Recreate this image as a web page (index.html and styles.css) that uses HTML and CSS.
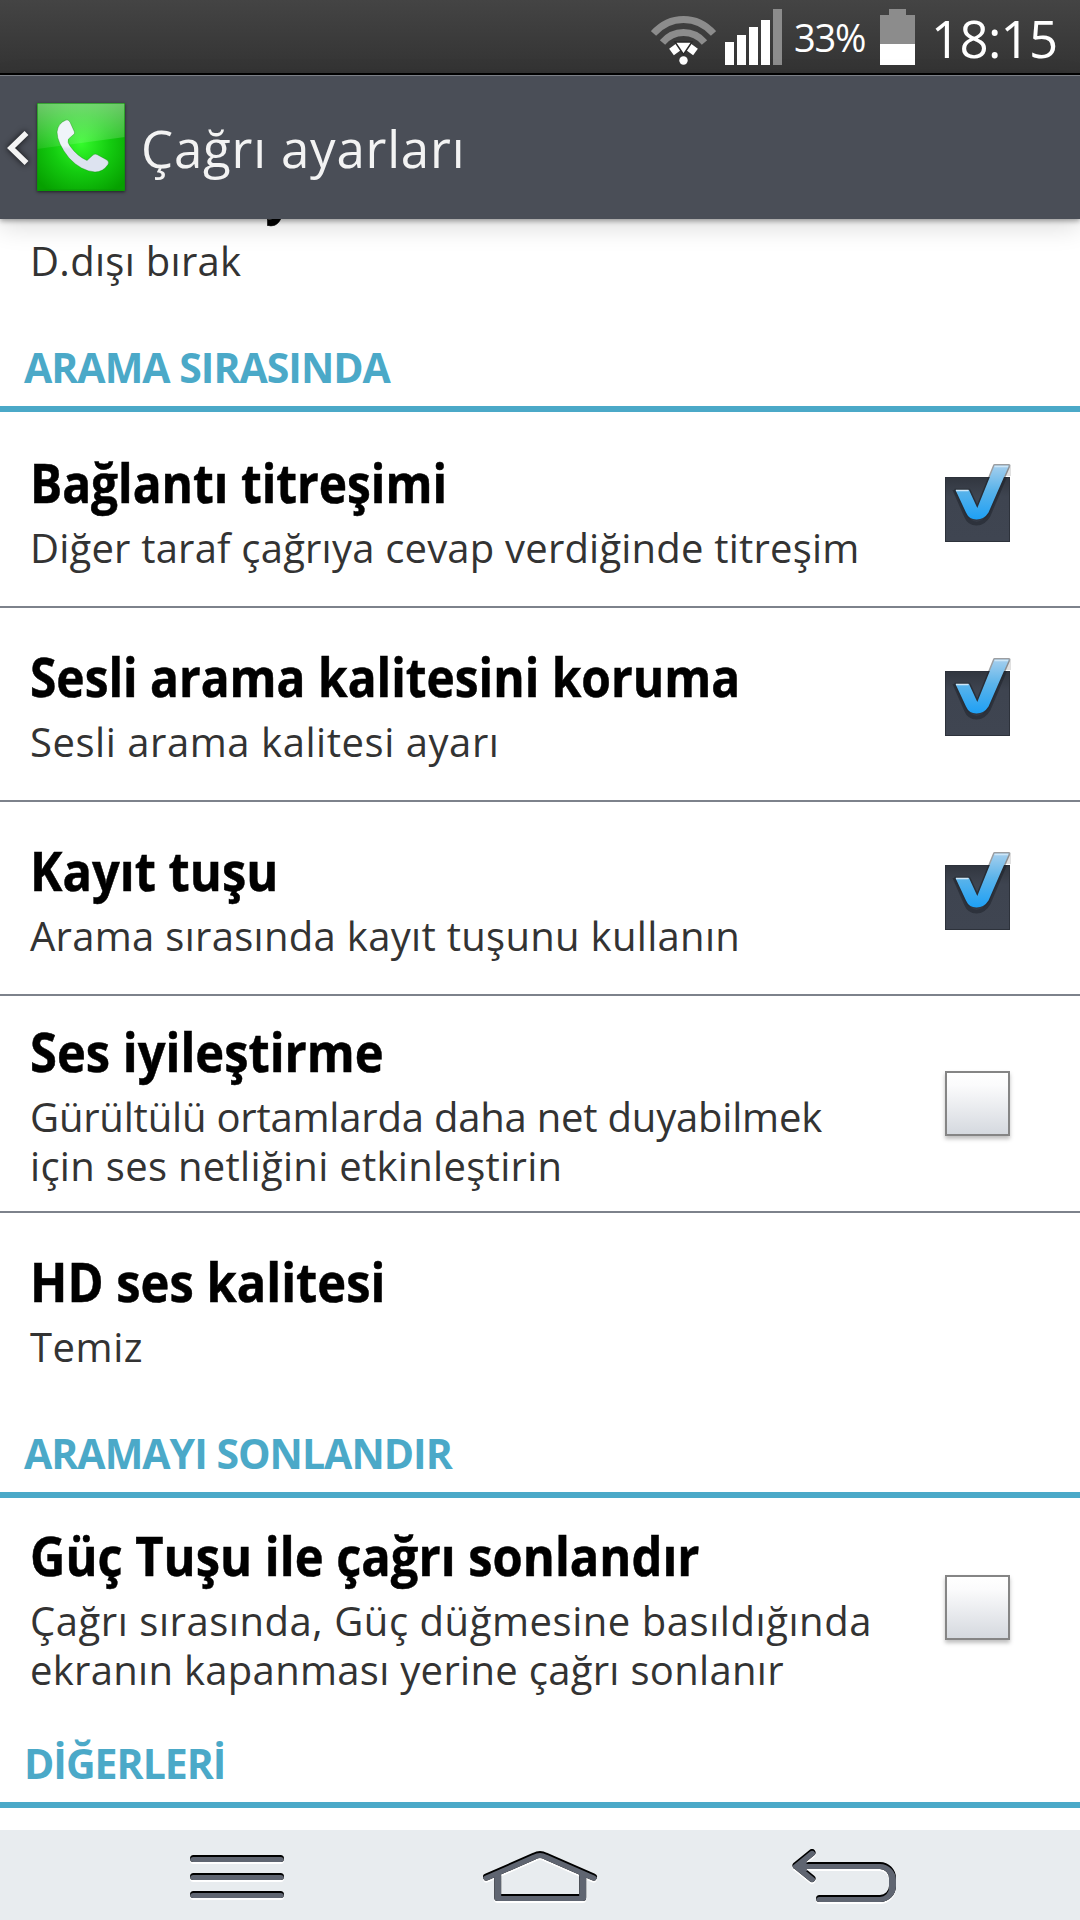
FILE: index.html
```html
<!DOCTYPE html>
<html lang="tr">
<head>
    <meta charset="UTF-8">
    <meta name="viewport" content="width=device-width, initial-scale=1.0">
    <title>Çağrı ayarları</title>
    <link rel="stylesheet" href="styles.css">
</head>
<body>
    <!-- Shared gradients and shapes -->
    <svg class="defs" width="0" height="0">
        <defs>
            <linearGradient id="tick-fill" x1="0" y1="0" x2="0" y2="1">
                <stop offset="0" stop-color="#a5cfee"/>
                <stop offset="0.45" stop-color="#5cb4ea"/>
                <stop offset="1" stop-color="#1ea0f5"/>
            </linearGradient>
            <linearGradient id="box-fill" x1="0" y1="0" x2="0" y2="1">
                <stop offset="0" stop-color="#31363f"/>
                <stop offset="0.3" stop-color="#3e4450"/>
                <stop offset="1" stop-color="#3f4551"/>
            </linearGradient>
            <clipPath id="box-clip"><rect x="0" y="13" width="65" height="65"/></clipPath>
            <symbol id="tick" viewBox="0 0 69 78">
                <rect x="0" y="13" width="65" height="65" fill="url(#box-fill)"/>
                <rect x="0.5" y="13.5" width="64" height="64" fill="none" stroke="#2d323b"/>
                <path d="M61 5l5-3v10h-8z" fill="#000" opacity="0.12"/>
                <path d="M10.5 28H24l8.3 18L49.5 3.5H64L43.5 51.5Q39 59.5 31.5 59.5T21 52z" fill="none" stroke="#1c2028" stroke-width="4" opacity="0.5" clip-path="url(#box-clip)"/>
                <path d="M10.5 26H24l8.3 18L49.5 1.5H64L43.5 48.5Q39 55.5 31.5 55.5T21 48.5z" fill="url(#tick-fill)" stroke="#23272f" stroke-opacity="0.45" stroke-width="3" stroke-linejoin="round" paint-order="stroke"/>
                <path d="M11 26.5h12.5M49.5 2.5h13.5" stroke="#cde6f7" stroke-width="1.5"/>
            </symbol>

            <path id="menu-shape" d="M3.5 3.5h87M3.5 21.5h87M3.5 39.5h87"/>
            <path id="home-shape" d="M14.7 26v21.5h85V26M3.5 27L51.5 6Q57 3 62.5 6L110.5 27"/>
            <path id="back-shape" d="M20 3.5L4 16.5L20 29.5M4 16.5H88A12.5 12.5 0 0 1 100.5 29V37A12.5 12.5 0 0 1 88 49.5H27.5"/>
            <mask id="menu-mask" maskUnits="userSpaceOnUse" x="0" y="0" width="120" height="60">
                <use href="#menu-shape" class="key-line" stroke="#fff"/>
            </mask>
            <mask id="home-mask" maskUnits="userSpaceOnUse" x="0" y="0" width="120" height="60">
                <use href="#home-shape" class="key-line" stroke="#fff"/>
            </mask>
            <mask id="back-mask" maskUnits="userSpaceOnUse" x="0" y="0" width="120" height="60">
                <use href="#back-shape" class="key-line" stroke="#fff"/>
            </mask>
        </defs>
    </svg>

    <div class="screen">
        <div class="status-bar">
            <svg class="wifi" width="65" height="50" viewBox="0 0 65 50">
                <path d="M2.5 17.5Q15 3.5 32.5 3.5T62.5 17.5" fill="none" stroke="#8c8c8c" stroke-width="7"/>
                <path d="M11.5 26.5Q20 16.5 32.5 16.5T53.5 26.5" fill="none" stroke="#8c8c8c" stroke-width="7"/>
                <path d="M20.5 36L28 30.5M37 30.5L44.5 36" stroke="#fff" stroke-width="8"/>
                <path d="M24 26h17l-8.5 12.5z" fill="#fff" stroke="#2a2a2a" stroke-width="1.5"/>
                <circle cx="32.5" cy="44.5" r="4.2" fill="#fff"/>
            </svg>
            <svg class="signal" width="57" height="56" viewBox="0 0 57 56">
                <path d="M0 33h9v23H0zM12 26h9v30h-9zM24 18h9v38h-9zM36 11h9v45h-9z" fill="#fff"/>
                <path d="M48 0h9v56h-9z" fill="#8c8c8c"/>
            </svg>
            <span class="percent">33%</span>
            <svg class="battery" width="35" height="56" viewBox="0 0 35 56">
                <path d="M9 0h17v6h9v29H0V6h9z" fill="#8c8c8c"/>
                <path d="M0 35h35v21H0z" fill="#fff"/>
            </svg>
            <span class="clock">18:15</span>
        </div>

        <header class="action-bar">
            <svg class="back" width="37" height="50" viewBox="0 0 37 50">
                <path d="M26.5 10L11 25l15.5 15" fill="none" stroke="#f4f4f4" stroke-width="5.5"/>
            </svg>
            <svg class="app-icon" width="88" height="88" viewBox="0 0 88 88">
                <defs>
                    <radialGradient id="glow" cx="0.5" cy="0.46" r="0.65">
                        <stop offset="0" stop-color="#35fb2c"/>
                        <stop offset="0.5" stop-color="#14cc10"/>
                        <stop offset="1" stop-color="#06a000"/>
                    </radialGradient>
                    <linearGradient id="gloss" x1="0" y1="0" x2="0" y2="1">
                        <stop offset="0" stop-color="#fff" stop-opacity="0.42"/>
                        <stop offset="1" stop-color="#fff" stop-opacity="0.08"/>
                    </linearGradient>
                    <linearGradient id="phone" x1="0" y1="0" x2="0" y2="1">
                        <stop offset="0.5" stop-color="#eff4f9"/>
                        <stop offset="0.56" stop-color="#dde3f0"/>
                    </linearGradient>
                </defs>
                <rect width="88" height="88" fill="url(#glow)"/>
                <path d="M0 0h88v34L0 46z" fill="url(#gloss)"/>
                <path d="M0.5 0v88M0 0.5h88M87.5 0v88M0 87h88" stroke="#12890f" stroke-opacity="0.6"/>
                <path d="M29 17Q31 16 33 19L37.5 29Q38 31 36 32L31.5 36Q30 39 33 43Q40 53 50 57.5L56 52Q58 50.5 60 51.5L70 57Q72.5 59 71 61.5Q66 69 58 69Q44 68 32 55Q20 40 20 29Q21 20 29 17z" fill="url(#phone)" stroke="#077a04" stroke-opacity="0.35"/>
            </svg>
            <h1>Çağrı ayarları</h1>
        </header>

        <main class="settings">
            <div class="item item-cut">
                <div class="item-text">
                    <h3>Otomatik yanıtlama</h3>
                    <p>D.dışı bırak</p>
                </div>
            </div>

            <h2>ARAMA SIRASINDA</h2>
            <div class="item item-first">
                <div class="item-text">
                    <h3 class="narrow">Bağlantı titreşimi</h3>
                    <p>Diğer taraf çağrıya cevap verdiğinde titreşim</p>
                </div>
                <svg class="checked" width="69" height="78"><use href="#tick"/></svg>
            </div>
            <div class="item">
                <div class="item-text">
                    <h3 class="narrow">Sesli arama kalitesini koruma</h3>
                    <p class="loose">Sesli arama kalitesi ayarı</p>
                </div>
                <svg class="checked" width="69" height="78"><use href="#tick"/></svg>
            </div>
            <div class="item">
                <div class="item-text">
                    <h3>Kayıt tuşu</h3>
                    <p>Arama sırasında kayıt tuşunu kullanın</p>
                </div>
                <svg class="checked" width="69" height="78"><use href="#tick"/></svg>
            </div>
            <div class="item item-tall">
                <div class="item-text">
                    <h3>Ses iyileştirme</h3>
                    <p><span class="tight">Gürültülü ortamlarda daha net duyabilmek</span><br>için ses netliğini etkinleştirin</p>
                </div>
                <span class="unchecked"></span>
            </div>
            <div class="item item-last">
                <div class="item-text">
                    <h3>HD ses kalitesi</h3>
                    <p class="loose">Temiz</p>
                </div>
            </div>

            <h2>ARAMAYI SONLANDIR</h2>
            <div class="item item-tall item-last">
                <div class="item-text">
                    <h3>Güç Tuşu ile çağrı sonlandır</h3>
                    <p><span class="loose">Çağrı sırasında, Güç düğmesine basıldığında</span><br>ekranın kapanması yerine çağrı sonlanır</p>
                </div>
                <span class="unchecked"></span>
            </div>

            <h2>DİĞERLERİ</h2>
        </main>

        <nav class="nav-bar">
            <svg class="key-menu" width="94" height="46">
                <use href="#menu-shape" class="key-line" stroke="#fff" y="2"/>
                <use href="#menu-shape" class="key-line" stroke="#000"/>
                <g mask="url(#menu-mask)">
                    <use href="#menu-shape" class="key-line" stroke="#5f6571" y="2"/>
                </g>
            </svg>
            <svg class="key-home" width="116" height="54">
                <use href="#home-shape" class="key-line" stroke="#fff" y="2"/>
                <use href="#home-shape" class="key-line" stroke="#000"/>
                <g mask="url(#home-mask)">
                    <use href="#home-shape" class="key-line" stroke="#5f6571" y="2"/>
                </g>
            </svg>
            <svg class="key-back" width="106" height="56">
                <use href="#back-shape" class="key-line" stroke="#fff" y="2"/>
                <use href="#back-shape" class="key-line" stroke="#000"/>
                <g mask="url(#back-mask)">
                    <use href="#back-shape" class="key-line" stroke="#5f6571" y="2"/>
                </g>
            </svg>
        </nav>
    </div>
</body>
</html>
```

FILE: styles.css
```css
/* General Styling */
* {
    box-sizing: border-box;
}

body {
    font-family: 'Open Sans', 'Noto Sans', sans-serif;
    margin: 0;
    background-color: #fff;
}

h1, h2, h3, p {
    margin: 0;
}

svg {
    display: block;
    flex: none;
}

.defs {
    position: absolute;
}

.screen {
    display: flex;
    flex-direction: column;
    width: 1080px;
    height: 1920px;
    overflow: hidden;
}

/* Status bar */
.status-bar {
    flex: none;
    display: flex;
    align-items: flex-start;
    justify-content: flex-end;
    height: 75px;
    padding: 9px 22px 0 0;
    background: linear-gradient(#444, #333);
    border-bottom: 2px solid #000;
    color: #fff;
}

.wifi {
    margin: 7px 9px 0 0;
}

.signal {
    margin-right: 12px;
}

.percent {
    width: 86px;
    font-size: 38px;
    font-weight: 500;
    letter-spacing: -1.2px;
    line-height: 56px;
    white-space: nowrap;
}

.clock {
    width: 143px;
    padding-left: 16px;
    font-size: 51px;
    font-weight: 500;
    letter-spacing: -0.7px;
    line-height: 58px;
    white-space: nowrap;
}

/* Action bar */
.action-bar {
    flex: none;
    display: flex;
    align-items: center;
    height: 144px;
    background-color: #4a4e57;
    border-top: 1px solid #7b7f86;
    box-shadow: 0 2px 5px rgba(0, 0, 0, 0.35), 0 8px 24px rgba(0, 0, 0, 0.14);
    position: relative;
    z-index: 1;
}

.back {
    filter: drop-shadow(0 0 3px rgba(0, 0, 0, 0.8));
}

.app-icon {
    margin-bottom: 2px;
    box-shadow: 0 1px 3px rgba(0, 0, 0, 0.6);
}

.action-bar h1 {
    padding-left: 16px;
    color: #f3f3f3;
    font-size: 51px;
    font-weight: 400;
    letter-spacing: 0.8px;
    line-height: 70px;
    white-space: nowrap;
}

/* Settings list */
.settings {
    flex: 1;
    min-height: 0;
    overflow: hidden;
}

.settings h2 {
    height: 93px;
    padding: 23px 24px 0;
    border-bottom: 6px solid #4ba9c8;
    color: #4ba9c8;
    font-size: 41px;
    font-weight: 700;
    letter-spacing: -1px;
    line-height: 50px;
    white-space: nowrap;
}

.item {
    display: flex;
    align-items: center;
    justify-content: space-between;
    height: 194px;
    padding: 0 70px 0 30px;
    border-bottom: 2px solid #7d828b;
}

.item-text {
    padding-top: 3px;
}

.item h3 {
    color: #000;
    font-size: 53px;
    font-weight: 700;
    line-height: 64px;
    white-space: nowrap;
    transform: scaleX(0.922);
    transform-origin: left;
    -webkit-text-stroke: 0.5px #000;
}

.item .narrow {
    transform: scaleX(0.903);
}

.item p {
    margin-top: 8px;
    color: #333;
    font-size: 40px;
    letter-spacing: 0.3px;
    line-height: 49px;
    white-space: nowrap;
}

.item .loose {
    letter-spacing: 0.55px;
}

.item .tight {
    letter-spacing: -0.2px;
}

.item-first {
    height: 196px;
    padding-top: 2px;
}

.item-first p {
    letter-spacing: 0.2px;
}

.item-tall {
    height: 217px;
}

.item-last {
    height: 192px;
    border-bottom: none;
}

.item-tall.item-last {
    height: 217px;
    padding-top: 2px;
}

.item-cut {
    height: 100px;
    align-items: flex-end;
    padding-bottom: 34px;
    border-bottom: none;
}

.item-cut h3 {
    margin-bottom: 11px;
    transform: scaleX(0.88);
}

.item-cut p {
    margin-top: 0;
}

/* Checkboxes */
.checked {
    margin: 0 -4px 14px 0;
}

.unchecked {
    flex: none;
    width: 65px;
    height: 65px;
    border: 2px solid #858585;
    background: linear-gradient(#fff, #fbfbfc 20%, #d5d9df);
    box-shadow: 0 3px 4px rgba(0, 0, 0, 0.25);
}

/* Navigation bar */
.nav-bar {
    flex: none;
    display: flex;
    align-items: flex-start;
    height: 90px;
    padding: 20px 0 0 190px;
    background-color: #e8ecef;
}

.key-line {
    fill: none;
    stroke-width: 7px;
    stroke-linecap: round;
    stroke-linejoin: round;
}

.key-menu {
    margin-top: 5px;
}

.key-home {
    margin-left: 199px;
}

.key-back {
    margin: -1px 0 0 193px;
}
```
